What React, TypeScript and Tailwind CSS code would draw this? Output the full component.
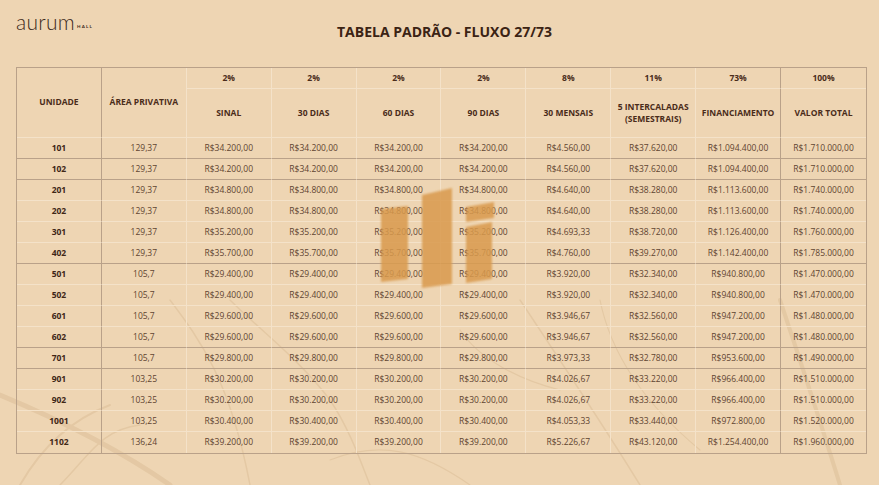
const DARK = 'border-[#b9a189]';

type Row = string[];

function unitRow(
  unit: string,
  area: string,
  parcel: string,
  monthly: string,
  interim: string,
  financing: string,
  total: string,
): Row {
  return [unit, area, parcel, parcel, parcel, parcel, monthly, interim, financing, total];
}

const rows: Row[] = [
  unitRow('101', '129,37', 'R$34.200,00', 'R$4.560,00', 'R$37.620,00', 'R$1.094.400,00', 'R$1.710.000,00'),
  unitRow('102', '129,37', 'R$34.200,00', 'R$4.560,00', 'R$37.620,00', 'R$1.094.400,00', 'R$1.710.000,00'),
  unitRow('201', '129,37', 'R$34.800,00', 'R$4.640,00', 'R$38.280,00', 'R$1.113.600,00', 'R$1.740.000,00'),
  unitRow('202', '129,37', 'R$34.800,00', 'R$4.640,00', 'R$38.280,00', 'R$1.113.600,00', 'R$1.740.000,00'),
  unitRow('301', '129,37', 'R$35.200,00', 'R$4.693,33', 'R$38.720,00', 'R$1.126.400,00', 'R$1.760.000,00'),
  unitRow('402', '129,37', 'R$35.700,00', 'R$4.760,00', 'R$39.270,00', 'R$1.142.400,00', 'R$1.785.000,00'),
  unitRow('501', '105,7', 'R$29.400,00', 'R$3.920,00', 'R$32.340,00', 'R$940.800,00', 'R$1.470.000,00'),
  unitRow('502', '105,7', 'R$29.400,00', 'R$3.920,00', 'R$32.340,00', 'R$940.800,00', 'R$1.470.000,00'),
  unitRow('601', '105,7', 'R$29.600,00', 'R$3.946,67', 'R$32.560,00', 'R$947.200,00', 'R$1.480.000,00'),
  unitRow('602', '105,7', 'R$29.600,00', 'R$3.946,67', 'R$32.560,00', 'R$947.200,00', 'R$1.480.000,00'),
  unitRow('701', '105,7', 'R$29.800,00', 'R$3.973,33', 'R$32.780,00', 'R$953.600,00', 'R$1.490.000,00'),
  unitRow('901', '103,25', 'R$30.200,00', 'R$4.026,67', 'R$33.220,00', 'R$966.400,00', 'R$1.510.000,00'),
  unitRow('902', '103,25', 'R$30.200,00', 'R$4.026,67', 'R$33.220,00', 'R$966.400,00', 'R$1.510.000,00'),
  unitRow('1001', '103,25', 'R$30.400,00', 'R$4.053,33', 'R$33.440,00', 'R$972.800,00', 'R$1.520.000,00'),
  unitRow('1102', '136,24', 'R$39.200,00', 'R$5.226,67', 'R$43.120,00', 'R$1.254.400,00', 'R$1.960.000,00'),
];

// rows followed by a darker separator line
const groupEnds = [0, 1, 5, 9, 10];

const percents = ['2%', '2%', '2%', '2%', '8%', '11%', '73%', '100%'];
const labels = ['SINAL', '30 DIAS', '60 DIAS', '90 DIAS', '30 MENSAIS', 'INTERCALADAS', 'FINANCIAMENTO', 'VALOR TOTAL'];

function colBorder(col: number) {
  if (col === 9) return 'border-r-0';
  if (col === 0 || col === 8) return 'border-r-[#b9a189]';
  return 'border-r-[#f4e2c9]';
}

function Watermark() {
  return (
    <svg
      className="pointer-events-none absolute left-0 top-0"
      width="879"
      height="485"
      viewBox="0 0 879 485"
    >
      <defs>
        <filter id="soft" x="-10%" y="-10%" width="120%" height="120%">
          <feGaussianBlur stdDeviation="0.8" />
        </filter>
      </defs>
      <g fill="#d99a4e" opacity="0.85" filter="url(#soft)">
        <polygon points="381,209 408,206 408,279 381,282" />
        <polygon points="422,195 452,188 452,284 422,288" />
        <polygon points="466,207 494,202 494,218 466,222" />
        <polygon points="466,227 492,222 492,279 466,283" />
      </g>
    </svg>
  );
}

function LeafTexture() {
  return (
    <svg
      className="pointer-events-none absolute left-0 top-0"
      width="879"
      height="485"
      viewBox="0 0 879 485"
    >
      <g fill="none" stroke="#dcbf98" strokeLinecap="round" opacity="0.55">
        <path d="M0 395 C60 420 120 450 170 485" strokeWidth="5" />
        <path d="M20 485 C40 450 70 420 110 405" strokeWidth="2" />
        <path d="M60 485 C90 455 100 430 140 425" strokeWidth="1.5" />
        <path d="M170 300 C200 340 230 380 250 485" strokeWidth="1.5" />
        <path d="M230 300 C260 330 300 360 330 400 C350 430 360 460 370 485" strokeWidth="1.5" />
        <path d="M520 300 C560 360 600 420 640 485" strokeWidth="1.5" />
        <path d="M600 300 C610 350 640 400 700 450" strokeWidth="1.2" />
        <path d="M780 300 C800 360 820 420 840 485" strokeWidth="4" />
        <path d="M460 330 C480 360 520 380 560 390" strokeWidth="1.2" />
        <path d="M330 460 C380 440 420 450 470 485" strokeWidth="1.2" />
      </g>
    </svg>
  );
}

export default function App() {
  return (
    <div className="relative h-[485px] w-[879px] overflow-hidden bg-[#eed5b3] font-['Open_Sans',sans-serif]">
      <LeafTexture />

      <div className="relative grid h-[67px] grid-cols-[1fr_auto_1fr]">
        <div className="flex items-start pl-[16px] pt-[11px]">
          <span className="font-['Lato',sans-serif] text-[21px] font-light leading-none tracking-[0.3px] text-[#3d2a20]">
            aurum
          </span>
          <span className="ml-[2px] mt-[14px] font-['Lato',sans-serif] text-[4.5px] font-bold leading-none tracking-[1.2px] text-[#3d2a20]">
            HALL
          </span>
        </div>
        <h1 className="pl-[10px] pt-[25px] text-[14px] font-bold leading-none text-[#3b2314]">
          TABELA PADRÃO - FLUXO 27/73
        </h1>
        <div />
      </div>

      <div className={`relative mx-[16px] w-[851px] border ${DARK}`}>
        <table className="w-full table-fixed border-separate border-spacing-0">
          <thead>
            <tr className="h-[21px]">
              <th
                rowSpan={2}
                className={`border-b border-r border-b-[#f4e2c9] ${colBorder(0)} p-0 text-[8.5px] font-bold text-[#4a2c1a]`}
              >
                UNIDADE
              </th>
              <th
                rowSpan={2}
                className={`border-b border-r border-b-[#f4e2c9] ${colBorder(1)} p-0 text-[8.5px] font-bold text-[#4a2c1a]`}
              >
                ÁREA PRIVATIVA
              </th>
              {percents.map((p, i) => (
                <th
                  key={`pct-${i}`}
                  className={`border-b border-r border-b-[#f4e2c9] ${colBorder(i + 2)} p-0 text-[8.5px] font-bold text-[#4a2c1a]`}
                >
                  {p}
                </th>
              ))}
            </tr>
            <tr className="h-[49px]">
              {labels.map((label, i) => (
                <th
                  key={`lbl-${i}`}
                  className={`border-b border-r border-b-[#f4e2c9] ${colBorder(i + 2)} p-0 text-[8.5px] font-bold leading-[12px] text-[#4a2c1a]`}
                >
                  {label === 'INTERCALADAS' ? (
                    <>
                      5 INTERCALADAS
                      <br />
                      (SEMESTRAIS)
                    </>
                  ) : (
                    label
                  )}
                </th>
              ))}
            </tr>
          </thead>
          <tbody>
            {rows.map((row, r) => (
              <tr key={row[0]} className="h-[21px]">
                {row.map((cell, c) => (
                  <td
                    key={`${row[0]}-${c}`}
                    className={`border-r p-0 text-center text-[8.5px] ${colBorder(c)} ${
                      r === rows.length - 1
                        ? 'border-b-0'
                        : groupEnds.includes(r)
                          ? 'border-b border-b-[#b9a189]'
                          : 'border-b border-b-[#f4e2c9]'
                    } ${c === 0 ? 'font-bold text-[#3f2616]' : 'text-[#5f4431]'}`}
                  >
                    {cell}
                  </td>
                ))}
              </tr>
            ))}
          </tbody>
        </table>
      </div>

      <Watermark />
    </div>
  );
}
